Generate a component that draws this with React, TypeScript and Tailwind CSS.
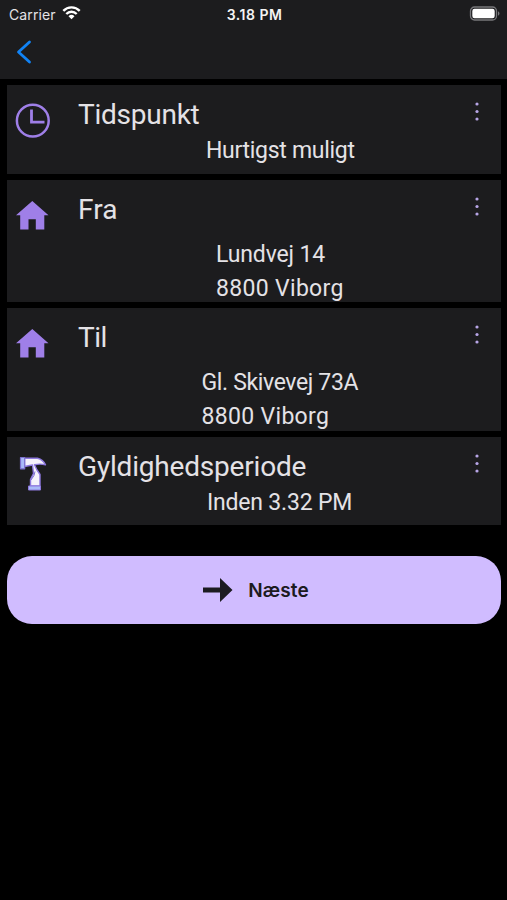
import type { ReactNode } from 'react';

function Clock() {
  return (
    <svg width="36" height="36" viewBox="0 0 36 36" fill="none" stroke="#9f7fe8" strokeWidth="2.5">
      <circle cx="17.8" cy="17.7" r="15.9" />
      <path d="M16.500 6.500v12.700h13" strokeWidth="2.800" />
    </svg>
  );
}

function House() {
  return (
    <svg width="36" height="36" viewBox="0 0 36 36" fill="#9f7fe8">
      <path d="M17.300 3 33.500 17.300h-4.200V31.500h-8.500V21.200h-7.300V31.500H5.200V17.300H1z" />
    </svg>
  );
}

function Hammer() {
  return (
    <svg width="36" height="36" viewBox="0 0 36 36" strokeLinejoin="round">
      <path d="M9.500 3.300h13c3.500.8 6.500 3.200 8 6.500-4-1-6.500-1-11-.1l2.500 5.300 3 4.500v11.500H15.500v-6.500l3-6-1-8.500-8 1.500z" fill="#f5f2fb" stroke="#8d78de" strokeWidth="1.400" />
      <path d="m16 25 3-4.500 1-4" fill="none" stroke="#7c70cf" strokeWidth="1" />
      <path d="M5.500 2.500h4.200v11.300H5.500z" fill="#a9b9f8" stroke="#7c70cf" strokeWidth="1.200" />
      <path d="M13.500 31h12v4h-12z" fill="#a9b9f8" stroke="#8d78de" strokeWidth="1" />
    </svg>
  );
}

function Dots() {
  return (
    <svg className="shrink-0" width="6" height="20" viewBox="0 0 6 20" fill="#b7a5e6">
      <circle cx="3" cy="2" r="1.600" />
      <circle cx="3" cy="9.500" r="1.600" />
      <circle cx="3" cy="17" r="1.600" />
    </svg>
  );
}

type CardProps = { icon: ReactNode; title: ReactNode; size: string; children: ReactNode };

function Card({ icon, title, size, children }: CardProps) {
  return (
    <section className={`flex flex-col bg-[#1c1c1e] ${size}`}>
      <div className="flex h-12 shrink-0 items-start pl-[7.500px] pr-[21.500px] pt-[17px]">
        <div className="mt-[0.500px] h-9 w-9 shrink-0">{icon}</div>
        <h2 className="ml-[27.500px] flex-1 whitespace-nowrap text-[28px] leading-[26px]">{title}</h2>
        <Dots />
      </div>
      {children}
    </section>
  );
}

export default function App() {
  return (
    <div className="flex h-[900px] w-[507px] flex-col overflow-hidden bg-black font-['Roboto',sans-serif] text-[#e4e2e6]">
      <header className="h-[79px] shrink-0 bg-[#1c1c1e]">
        <div className="grid h-7 grid-cols-3 items-center pl-[9px] pr-[7px] font-['Inter',sans-serif] text-[13px]">
          <div className="flex items-center gap-[6px]">
            <span className="pt-px text-[14px] tracking-[0.100px]">Carrier</span>
            <svg className="-mt-px" width="19" height="15" viewBox="0 0 19 15" fill="none" stroke="#fff" strokeWidth="2.400">
              <path d="M1.300 4.800a11.500 11.500 0 0 1 16.400 0M4.300 8a7.300 7.300 0 0 1 10.400 0" />
              <path d="m6.500 10.300 3 3 3-3a4.300 4.300 0 0 0-6 0z" fill="#fff" stroke="none" />
            </svg>
          </div>
          <span className="whitespace-nowrap pt-px text-center text-[14px] font-semibold tracking-[0.500px] text-[#f4f4f5]">3.18 PM</span>
          <svg className="-mt-[2px] justify-self-end" width="31" height="15" viewBox="0 0 31 15">
            <rect x="1.500" y="1" width="26" height="13" rx="4" fill="none" stroke="#77777a" strokeWidth="1.300" />
            <rect x="3.300" y="2.800" width="22.400" height="9.400" rx="2.200" fill="#fff" />
            <path d="M29 5.300c2 .8 2 3.600 0 4.400z" fill="#77777a" />
          </svg>
        </div>
        <svg className="ml-[15px] mt-[11px]" width="18" height="26" viewBox="0 0 18 26" fill="none" stroke="#1183f5" strokeWidth="2.800" strokeLinecap="round" strokeLinejoin="round">
          <path d="M14.500 3 3.500 13 14.500 23" />
        </svg>
      </header>
      <main className="flex flex-col gap-[6px] pl-[7px] pr-[6px] pt-[6px]">
        <Card icon={<Clock />} title={<span className="tracking-[-0.250px]">Tidspunkt</span>} size="h-[89px]">
          <p className="pl-[199px] text-[23px] leading-9 tracking-[-0.290px]">Hurtigst muligt</p>
        </Card>
        <Card icon={<House />} title={<span className="tracking-[0.100px]">Fra</span>} size="h-[122px]">
          <p className="pl-[209px] pt-[10px] text-[23px] leading-[33.500px]">
            <span className="block tracking-[-0.150px]">Lundvej 14</span>
            <span className="block tracking-[0.320px]">8800 Viborg</span>
          </p>
        </Card>
        <Card icon={<House />} title={<span className="tracking-[-0.500px]">Til</span>} size="h-[123px]">
          <p className="pl-[194.500px] pt-[10px] text-[23px] leading-[33.500px]">
            <span className="block tracking-[-0.350px]">Gl. Skivevej 73A</span>
            <span className="block tracking-[0.320px]">8800 Viborg</span>
          </p>
        </Card>
        <Card icon={<Hammer />} title={<span className="tracking-[-0.190px]">Gyldighedsperiode</span>} size="h-[88px]">
          <p className="pl-[200px] text-[23px] leading-9 tracking-[-0.200px]">Inden 3.32 PM</p>
        </Card>
        <button className="mt-[25px] flex h-[68px] w-full items-center justify-center gap-[15px] rounded-[25px] bg-[#d0bcff] pl-[4px] font-['Inter',sans-serif] text-[19px] font-semibold text-[#1c1b20]">
          <svg width="30" height="26" viewBox="0 0 30 26" fill="currentColor"><path d="M0 10.500h17V1l12.500 12L17 25v-9.500H0z" /></svg>
          <span className="pt-[2px] tracking-[0.150px]">Næste</span>
        </button>
      </main>
    </div>
  );
}
